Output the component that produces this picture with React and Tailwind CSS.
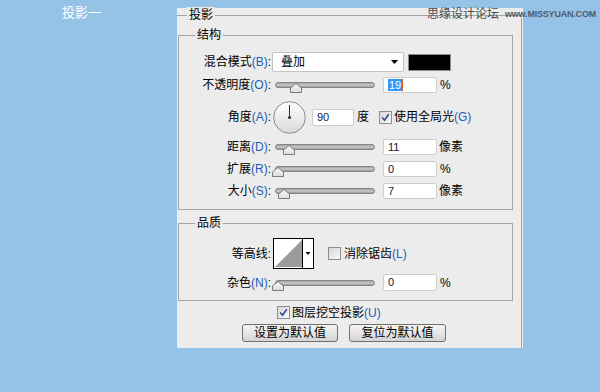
import React from "react";

function Key({ t, k }) {
  return (
    <>
      {t}
      {k && <span className="text-[#1d5cb6]">({k})</span>}:
    </>
  );
}

function Label({ children }) {
  return (
    <div className="w-[92px] shrink-0 text-right leading-[16px] whitespace-nowrap">
      {children}
    </div>
  );
}

function Slider({ thumb }) {
  return (
    <div className="relative w-[100px] h-[6px] rounded-[3px] border border-[#858585] bg-gradient-to-b from-[#9c9c9c] via-[#cdcdcd] to-[#979797]">
      <svg
        className={`absolute top-[0px] ${thumb}`}
        width="12"
        height="10"
        viewBox="0 0 12 10"
      >
        <defs>
          <linearGradient id="tg" x1="0" y1="0" x2="0" y2="1">
            <stop offset="0" stopColor="#fbfbfb" />
            <stop offset="1" stopColor="#dcdcdc" />
          </linearGradient>
        </defs>
        <path
          d="M6 0.5 L11.5 5 V9.5 H0.5 V5 Z"
          fill="url(#tg)"
          stroke="#7a7a7a"
          strokeWidth="1"
        />
      </svg>
    </div>
  );
}

function Field({ w = "w-[54px]", h = "h-[16px]", children }) {
  return (
    <div
      className={`${w} ${h} shrink-0 bg-white border border-[#cdcdcd] rounded-[2px] flex items-center pl-[4px] text-[11px] text-[#14143c] leading-none`}
    >
      {children}
    </div>
  );
}

function Check({ checked }) {
  return (
    <div className="w-[13px] h-[13px] shrink-0 border border-[#8e8f8f] bg-gradient-to-br from-[#d6d6d6] to-[#fafafa] flex items-center justify-center">
      {checked && (
        <svg width="9" height="9" viewBox="0 0 9 9">
          <path
            d="M1.2 4.6 L3.5 7.2 L7.8 1.2"
            stroke="#2b4596"
            strokeWidth="1.5"
            fill="none"
          />
        </svg>
      )}
    </div>
  );
}

function Button({ w, children }) {
  return (
    <div
      className={`${w} h-[18px] rounded-[3px] border border-[#707070] bg-gradient-to-b from-[#f3f3f3] via-[#e6e6e6] to-[#d3d3d3] flex items-center justify-center leading-none text-[12px] text-black`}
    >
      {children}
    </div>
  );
}

export default function App() {
  return (
    <div className="relative w-[600px] h-[392px] overflow-hidden bg-[#95c3e8] flex font-['Liberation_Sans','Noto_Sans_CJK_SC',sans-serif] text-[12px] text-black">
      <div className="w-[177px] shrink-0 pl-[62px] pt-[5px] text-white text-[13px] leading-[16px]">
        投影一
      </div>

      <div className="mt-[8px] w-[346px] h-[340px] bg-[#ececec] pt-[7px]">
        <div className="relative w-[345px] h-[333px] border-t border-r border-[#a4a4a4]">
          <span className="absolute left-[10px] -top-[9px] px-[2px] bg-[#ececec] leading-[16px]">
            投影
          </span>

          {/* 结构 */}
          <div className="relative mt-[19px] ml-[1px] w-[335px] h-[175px] border border-[#a4a4a4]">
            <span className="absolute left-[16px] -top-[9px] px-[2px] bg-[#ececec] leading-[16px]">
              结构
            </span>

            <div className="mt-[16px] h-[20px] flex items-center">
              <Label>
                <Key t="混合模式" k="B" />
              </Label>
              <div className="ml-[1px] w-[132px] h-[20px] bg-white border border-[#c4c4c4] rounded-[2px] flex items-center justify-between pl-[8px] pr-[5px]">
                <span className="leading-none">叠加</span>
                <svg width="7" height="4" viewBox="0 0 7 4">
                  <path d="M0 0 H7 L3.5 4 Z" fill="#000" />
                </svg>
              </div>
              <div className="ml-[4px] w-[43px] h-[17px] bg-black border border-[#8c8c8c]" />
            </div>

            <div className="mt-[5px] h-[16px] flex items-center">
              <Label>
                <Key t="不透明度" k="O" />
              </Label>
              <div className="ml-[4px]">
                <Slider thumb="left-[14px]" />
              </div>
              <div className="ml-[8px]">
                <Field>
                  <span className="bg-[#3297fd] text-white px-[1px] leading-[12px]">19</span>
                  <span className="w-[1px] h-[12px] bg-[#d05a1e]" />
                </Field>
              </div>
              <span className="ml-[3px] leading-none">%</span>
            </div>

            <div className="mt-[8px] h-[32px] flex items-center">
              <Label>
                <Key t="角度" k="A" />
              </Label>
              <svg className="ml-[2px] shrink-0" width="33" height="33" viewBox="0 0 33 33">
                <defs>
                  <linearGradient id="dg" x1="0" y1="0" x2="0" y2="1">
                    <stop offset="0" stopColor="#ffffff" />
                    <stop offset="1" stopColor="#d9d9d9" />
                  </linearGradient>
                </defs>
                <circle cx="16.5" cy="16.5" r="15.8" fill="url(#dg)" stroke="#8a8a8a" strokeWidth="1" />
                <line x1="16.5" y1="16.5" x2="16.5" y2="4" stroke="#333" strokeWidth="1" />
                <circle cx="16.5" cy="16.5" r="1.6" fill="#333" />
              </svg>
              <div className="ml-[6px]">
                <Field w="w-[42px]" h="h-[17px]">90</Field>
              </div>
              <span className="ml-[3px] leading-none">度</span>
              <div className="ml-[10px]">
                <Check checked />
              </div>
              <span className="ml-[2px] leading-none whitespace-nowrap">
                使用全局光<span className="text-[#1d5cb6]">(G)</span>
              </span>
            </div>

            <div className="mt-[6px] h-[16px] flex items-center">
              <Label>
                <Key t="距离" k="D" />
              </Label>
              <div className="ml-[4px]">
                <Slider thumb="left-[7px]" />
              </div>
              <div className="ml-[8px]">
                <Field>11</Field>
              </div>
              <span className="ml-[2px] leading-none">像素</span>
            </div>

            <div className="mt-[6px] h-[16px] flex items-center">
              <Label>
                <Key t="扩展" k="R" />
              </Label>
              <div className="ml-[4px]">
                <Slider thumb="-left-[4px]" />
              </div>
              <div className="ml-[8px]">
                <Field>0</Field>
              </div>
              <span className="ml-[3px] leading-none">%</span>
            </div>

            <div className="mt-[6px] h-[16px] flex items-center">
              <Label>
                <Key t="大小" k="S" />
              </Label>
              <div className="ml-[4px]">
                <Slider thumb="left-[2px]" />
              </div>
              <div className="ml-[8px]">
                <Field>7</Field>
              </div>
              <span className="ml-[2px] leading-none">像素</span>
            </div>
          </div>

          {/* 品质 */}
          <div className="relative mt-[13px] ml-[1px] w-[335px] h-[78px] border border-[#a4a4a4]">
            <span className="absolute left-[16px] -top-[9px] px-[2px] bg-[#ececec] leading-[16px]">
              品质
            </span>

            <div className="mt-[14px] h-[31px] flex items-center">
              <Label>
                <Key t="等高线" />
              </Label>
              <svg className="ml-[2px] shrink-0" width="41" height="31" viewBox="0 0 41 31">
                <rect x="0.5" y="0.5" width="40" height="30" fill="#fff" stroke="#000" />
                <polygon points="2,29 29,2 29,29" fill="#9c9c9c" />
                <line x1="29.5" y1="1" x2="29.5" y2="30" stroke="#000" />
                <path d="M32.5 14 H37.5 L35 17 Z" fill="#000" />
              </svg>
              <div className="ml-[14px]">
                <Check />
              </div>
              <span className="ml-[3px] leading-none whitespace-nowrap">
                消除锯齿<span className="text-[#1d5cb6]">(L)</span>
              </span>
            </div>

            <div className="mt-[5px] h-[17px] flex items-center">
              <Label>
                <Key t="杂色" k="N" />
              </Label>
              <div className="ml-[4px]">
                <Slider thumb="-left-[4px]" />
              </div>
              <div className="ml-[8px]">
                <Field h="h-[17px]">0</Field>
              </div>
              <span className="ml-[3px] leading-none">%</span>
            </div>
          </div>

          <div className="mt-[5px] ml-[100px] h-[13px] flex items-center">
            <Check checked />
            <span className="ml-[2px] leading-none whitespace-nowrap">
              图层挖空投影<span className="text-[#1d5cb6]">(U)</span>
            </span>
          </div>

          <div className="mt-[5px] ml-[65px] flex gap-[11px]">
            <Button w="w-[96px]">设置为默认值</Button>
            <Button w="w-[97px]">复位为默认值</Button>
          </div>
        </div>
      </div>

      <div className="absolute left-[427px] top-[6px] flex items-center gap-[6px] whitespace-nowrap">
        <span className="text-[12px] leading-[16px] text-[#4b4b4b]">思缘设计论坛</span>
        <span className="text-[9px] font-bold leading-[16px] text-[#4f5a66] tracking-[-0.2px]">
          www.MISSYUAN.COM
        </span>
      </div>
    </div>
  );
}
